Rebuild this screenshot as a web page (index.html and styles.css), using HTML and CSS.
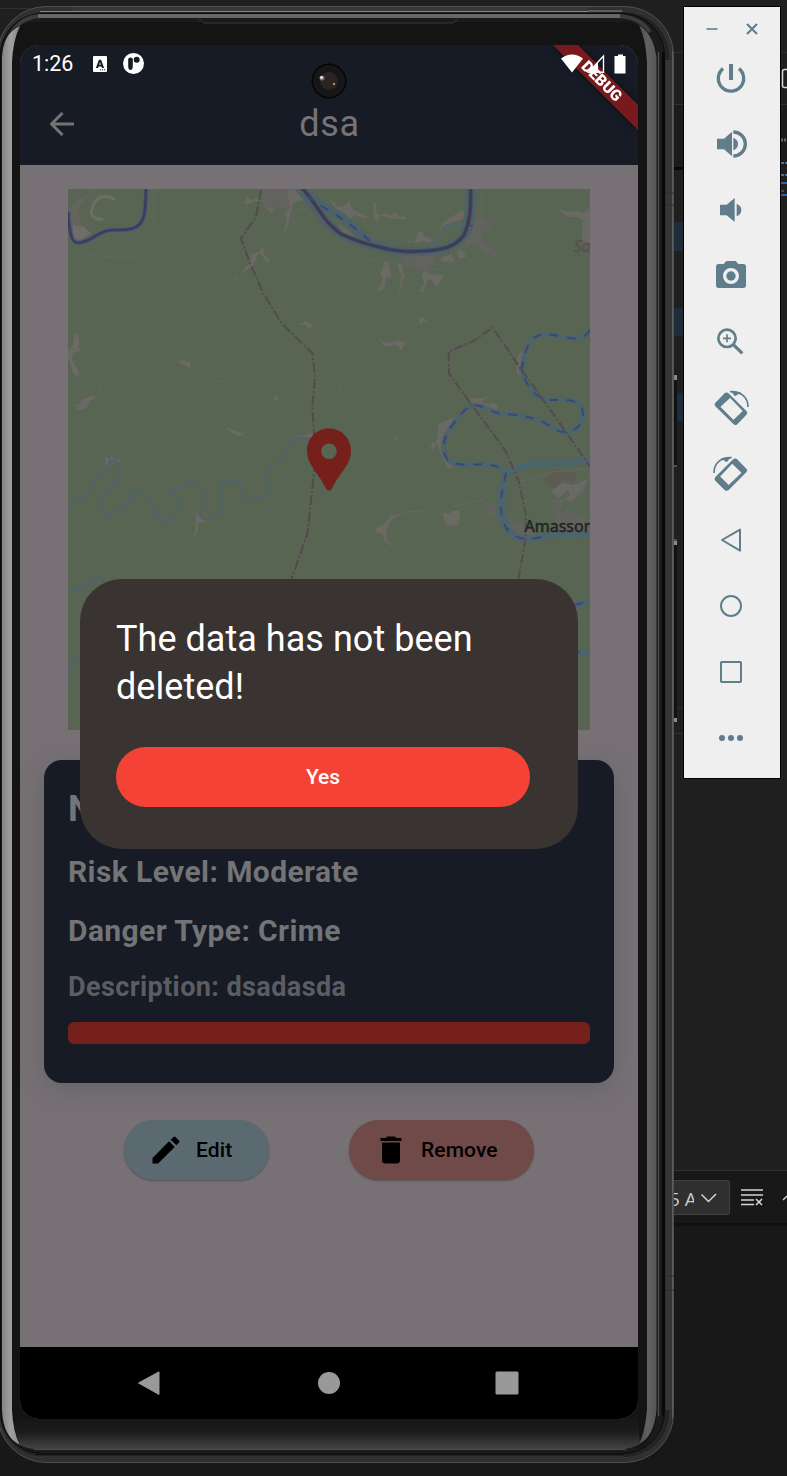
FILE: index.html
```html
<!DOCTYPE html>
<html lang="en">
<head>
<meta charset="utf-8">
<title>Emulator</title>
<link rel="stylesheet" href="styles.css">
</head>
<body>
<div class="desktop">
  <svg class="editor" viewBox="0 0 787 1476">
    <rect width="787" height="1476" fill="#1f1f1f"/>
    <rect y="1171" width="787" height="305" fill="#181818"/>
    <path d="M0 8.500H30M670 52.500H787M670 104.500H787M670 1170.500H787M670 708.500H684M670 733.500H684" stroke="#303030"/>
    <rect x="670" y="105" width="117" height="62" fill="#1b1b1b"/>
    <rect x="670" y="167" width="14" height="3" fill="#080808"/>
    <path d="M672 222H684V251H672ZM672 308H684V336H672ZM672 393H684V421H672Z" fill="#1f2d3a"/>
    <rect x="782.500" y="69.500" width="12" height="18" rx="2" fill="none" stroke="#d8d8d8" stroke-width="1.500"/>
    <path d="M781 140H787" stroke="#8a5a48" stroke-width="3" stroke-dasharray="2 1"/>
    <path d="M781 163H787M781 175H787" stroke="#47719a" stroke-width="2" stroke-dasharray="3 1"/>
    <path d="M781 183H787M781 195H787" stroke="#2864ad" stroke-width="2"/>
    <path d="M781 191H784" stroke="#777"/>
    <rect x="670" y="1223" width="117" height="3" fill="#101010"/>
    <rect x="660.500" y="1180.500" width="69" height="34" rx="2" fill="#2f2f2f" stroke="#3f3f3f"/>
    <path d="M701.500 1194.500L708.500 1201.500L716 1194" fill="none" stroke="#d4d4d4" stroke-width="1.500"/>
    <path d="M741 1190H763M741 1195H763M741 1200H754M741 1204.500H754" stroke="#d4d4d4" stroke-width="1.600"/>
    <path d="M756 1199L762 1205M762 1199L756 1205" stroke="#d4d4d4" stroke-width="1.600"/>
    <path d="M783 1200L787 1196" stroke="#d4d4d4" stroke-width="1.500"/>
  </svg>
  <div class="combo-text">5 A</div>

  <main class="phone">
    <svg class="frame" viewBox="0 0 678 1476">
      <defs>
        <linearGradient id="bottomGlow" x1="0" x2="0" y1="0" y2="1"><stop offset="0" stop-color="#171717"/><stop offset=".45" stop-color="#1c1c1c"/><stop offset="1" stop-color="#444"/></linearGradient>
        <linearGradient id="leftMetal"><stop offset="0" stop-color="#848484"/><stop offset=".5" stop-color="#a0a0a0"/><stop offset="1" stop-color="#858585"/></linearGradient>
        <linearGradient id="rightMetal"><stop offset="0" stop-color="#4e4e4e"/><stop offset=".5" stop-color="#626262"/><stop offset="1" stop-color="#555"/></linearGradient>
      </defs>
      <path d="M670 374H677V465H670ZM670 540H677V721H670Z" fill="#111"/>
      <path d="M673.500 466V540M673 466H677M673 540H677" stroke="#858585"/>
      <path d="M673 375H677V380H673ZM673 541H677V545H673ZM673 718H677V722H673Z" fill="#8a8a8a"/>
      <rect x="-2.500" y="6.500" width="676" height="1456" rx="49" fill="#303030" stroke="#505050"/>
      <path d="M73 7H587V11H73Z" fill="#383838"/>
      <rect x="-1" y="11.500" width="671" height="1446" rx="45" fill="#232323" stroke="#353535"/>
      <path d="M40 11.500H588M588 11H622" stroke="#858585"/>
      <rect x=".5" y="13.500" width="664" height="1440" rx="42" fill="#1b1b1b" stroke="#0a0a0a"/>
      <path d="M10 36Q20 16 42 16H618Q640 17 650 32" fill="none" stroke="#3c3c3c" stroke-width="4"/>
      <path d="M38 16H620" stroke="#676767" stroke-width="4"/>
      <rect x="662" y="52" width="2" height="1364" fill="#090909"/>
      <path d="M658.500 52V1416M666.500 60V1410" stroke="#4a4a4a" stroke-width="1.500"/>
      <path d="M669 60V1410" stroke="#363636" stroke-width="6"/>
      <path d="M672.500 50V1418" stroke="#5c5c5c"/>
      <path d="M2 58Q3 32 19 26L30 22H630L640 26Q655 38 657 56V1412Q655 1440 638 1448H26Q3 1440 2 1412Z" fill="#141414"/>
      <path d="M2 58Q3 33 20 26Q13 40 12 62V1410Q13 1432 20 1445Q3 1437 2 1410Z" fill="url(#leftMetal)"/>
      <path d="M656.500 58Q654 35 639 25Q646 40 647 62V1410Q645 1432 639 1444Q654 1437 656.500 1410Z" fill="url(#rightMetal)"/>
      <path d="M20 1419H638L640 1444Q632 1449 620 1449H38Q26 1449 20 1445L14 1425Z" fill="url(#bottomGlow)"/>
      <path d="M34 1449.500H626" stroke="#4a4a4a"/>
      <path d="M36 1454H624" stroke="#111" stroke-width="2"/>
      <path d="M36 1457.500H624" stroke="#303030" stroke-width="3"/>
      <path d="M199 19L204 23H453L458 19" fill="#1b1b1b" stroke="#383838"/>
      <path d="M666 193H674M666 205H674M666 1276H674M666 1290H674" stroke="#2a2a2a"/>
    </svg>

    <div class="screen">
      <header class="appbar">
        <svg class="banner" viewBox="0 0 100 90">
          <path d="M15 0H40L120 80V105Z" fill="#7a191d"/>
          <text x="64" y="41.500" transform="rotate(45 64 36)" text-anchor="middle" class="banner-text">DEBUG</text>
        </svg>
        <div class="status">
          <span class="time">1:26</span>
          <svg class="s-icon s-a" viewBox="0 0 14 16"><rect width="14" height="16" rx="1" fill="#fff"/><path d="M2.900 12L5.900 3.700H8.100L11.100 12H8.900L8.400 10.400H5.600L5.100 12ZM6.200 8.700H7.800L7 6.200Z" fill="#161b26" fill-rule="evenodd"/><path d="M7 13.800H13" stroke="#161b26" stroke-dasharray="1.200 .8"/></svg>
          <svg class="s-icon s-p" viewBox="0 0 21 21"><circle cx="10.500" cy="10.500" r="10.500" fill="#fff"/><path d="M5.200 6.500Q5.200 4.500 7.500 4.500Q9.800 4.500 9.800 6.500V13Q9.800 17 7.500 17Q5.200 17 5.200 13Z" fill="#161b26"/><circle cx="13.700" cy="6.800" r="3" fill="#161b26"/></svg>
          <span class="spacer"></span>
          <svg class="s-right" viewBox="0 0 66 20"><path d="M0 4.500Q11-3.500 22 4.500L11 18.500Z" fill="#fff"/><path d="M42.500 2V18.200H27.500Z" fill="none" stroke="#fff" stroke-width="1.400"/><path d="M27 19L37 8V19Z" fill="#fff"/><path d="M57 .5H62V2H64.500V19.500H53.500V2H57Z" fill="#fff"/></svg>
        </div>
        <div class="titlebar">
          <svg class="back" viewBox="0 0 24 24"><path d="M24 12H2M12.500 1L1.500 12L12.500 23" fill="none" stroke="#747474" stroke-width="3"/></svg>
          <h1 class="title">dsa</h1>
        </div>
        <svg class="camera" viewBox="0 0 36 36"><circle cx="18" cy="18" r="17.500" fill="#050505"/><circle cx="18" cy="18" r="16" fill="#161616"/><circle cx="18" cy="18" r="9" fill="#292321"/><circle cx="11" cy="15" r="2.500" fill="#7a7580"/><circle cx="10.500" cy="14.500" r="1.200" fill="#fff"/><circle cx="23" cy="21" r="1.200" fill="#c48a4a"/></svg>
      </header>

      <section class="content">
        <svg class="map" viewBox="68 189 522 541">
          <rect x="68" y="189" width="522" height="541" fill="#586552"/>
          <g transform="translate(60 180) scale(.33333)" fill="none" stroke-linejoin="round">
            <g fill="#6a6964">
              <path d="M24 95L45 65L85 45L95 30L60 75L52 105L68 135L95 160L60 190L30 185Z" fill="#64645f"/>
              <path d="M38 135L70 140L92 160L60 180L36 170Z" fill="#706d68"/>
              <path d="M45 460L52 458L58 480L55 500L63 510L38 522L36 540L55 570L58 595L40 582L24 530V510L38 495Z"/>
              <path d="M40 680L58 672L65 658L80 655L95 645L112 652L90 662L80 685L60 690L45 688L60 680Z"/>
              <path d="M350 545L370 540L392 547L390 563L372 556Z"/>
              <path d="M135 832L150 838L155 828L165 838L180 836L175 850H142L145 868L135 850Z"/>
              <path d="M497 742L520 750L545 758L560 757L540 770L515 757L500 748Z"/>
              <path d="M600 50L615 30H680L700 60L685 95L655 80L635 90L610 70Z" fill="#62635e"/>
              <path d="M552 68L562 50L575 60L600 52L595 64L575 66L560 75ZM610 75L645 90L632 98ZM680 28H725L750 75L725 60L700 68L690 110L680 150L668 158L680 125L675 100L690 85ZM720 85L732 90L725 94ZM745 105L758 108L750 112Z"/>
              <path d="M572 225L600 212L610 202L612 225L630 242L618 248L610 230L595 220L580 255L560 270L540 282L555 262L572 250Z"/>
              <path d="M715 435L738 422L760 438L745 445L738 434ZM640 655L650 645L658 657L650 664ZM408 995L418 1010L440 1018L430 1030L415 1025L412 1055L400 1075L407 1040ZM700 770L715 766L720 770L758 757V775ZM435 348L455 340L438 352ZM520 292L532 290L524 300Z"/>
            </g>
            <path d="M165 60Q130 35 105 65Q75 120 130 118" stroke="#6d6d68" stroke-width="9"/>
            <path d="M24 275L80 222L130 230L225 233L280 140V27M24 90L110 27M600 60L810 195" stroke="#636661" stroke-width="3"/>
            <path d="M60 460L100 435L140 410M115 645Q115 590 170 588C230 585 230 540 275 505M293 550L350 545M388 562Q430 610 500 605M460 820V795L500 785V745M535 700Q620 740 570 760M690 400V440M600 490L620 480L645 492M62 368L82 384" stroke="#5e6858" stroke-width="3"/>
            <path d="M24 95C30 195 40 200 90 178C145 142 150 152 200 149C265 144 254 85 258 27" stroke="#50626b" stroke-width="17"/>
            <path d="M24 95C30 195 40 200 90 178C145 142 150 152 200 149C265 144 254 85 258 27" stroke="#474662" stroke-width="10"/>
            <path d="M24 95C30 195 40 200 90 178C145 142 150 152 200 149C265 144 254 85 258 27" stroke="#3b3a60" stroke-width="5"/>
            <path d="M24 990L30 962L65 955Q85 945 110 893L145 872L148 845Q170 835 180 865C185 900 120 940 120 970L140 1008Q155 1010 205 965Q213 925 245 937C275 950 268 970 275 985L305 1020Q325 1035 340 1010Q370 970 355 955C320 940 330 925 345 928C380 928 375 905 390 905C420 910 440 960 428 975C410 1005 425 1018 440 1018C470 1015 495 985 490 975C470 960 485 905 495 903Q540 895 545 930C545 965 560 965 570 965L590 955L620 945C640 925 607 885 612 875L655 845C690 820 675 810 695 775H755" stroke="#4f636a" stroke-width="7"/>
            <path d="M603 30L588 110L543 175L570 250L610 340L665 430L757 520L765 590L757 680L762 760V880L742 1060L695 1197" stroke="#534950" stroke-width="6" stroke-dasharray="30 7 6 7"/>
            <path d="M24 1232Q50 1235 70 1215Q115 1180 140 1210M24 1480V1452Q45 1445 62 1425M26 1480V1505" stroke="#4f636a" stroke-width="8"/>
          </g>
          <g transform="translate(325 180) scale(.33333)" fill="none" stroke-linejoin="round">
            <g fill="#6a6964">
              <path d="M10 55L40 80L60 75L75 62L80 85L95 95L130 110L115 115L90 105L75 118L50 110ZM145 70L155 65L152 92L162 105L190 98L185 108L165 108L155 122L147 110ZM175 108L200 104L210 95L222 112L245 108L240 118L200 115ZM275 160L290 152L300 170L328 180L310 188L290 182L265 192L275 175ZM250 180L270 188L250 186ZM330 155L360 125L410 90L430 105L420 118L385 125L360 135Z"/>
              <path d="M350 230L370 228L375 218L390 245L350 245ZM395 215L412 208L425 232L400 235Z"/>
              <path d="M430 120L465 110L500 130L495 150L468 155L475 185L495 202L510 210L518 232L480 220L450 190L420 200Z" fill="#62635e"/>
              <path d="M225 222H330L320 262L300 275L275 265L245 255Z" fill="#62635e"/>
              <path d="M175 240L190 250L200 290L184 292L178 325L155 335L170 310L172 290L165 280L175 265ZM215 248L230 252L238 290L228 315L225 345L222 330L230 290ZM300 272L315 282L355 285L345 305L335 320L320 300L308 298L295 335L282 335L298 310L290 285ZM280 415L295 410L307 425L297 424L285 435ZM160 475L178 486L200 488L215 482L243 485L235 500L230 512L215 495L200 497L180 500Z"/>
              <path d="M695 85L730 95L750 92L775 100L795 80V190L770 180L775 120L755 112L730 110ZM340 730L360 725L375 715L400 710L380 745L360 755L350 775L355 830L385 865H370L350 830L335 790L325 810L320 798L305 810L322 790L335 785ZM435 655H470L490 650L470 665L492 672L500 668L520 672L515 690L470 675L440 672ZM575 540L585 515L595 515L590 590L575 580ZM352 998L375 1000L380 992L405 992L403 1035L380 1038L360 1028ZM152 1045L180 1030L200 1005L228 1005L200 1018L185 1045L185 1080L210 1105L180 1085L170 1060L155 1060ZM200 768L215 772L225 790Z"/>
              <path d="M675 960L720 955L715 980L705 1000L735 995L795 1020V1065L650 1070L600 1035L570 1025L550 1000L550 1040L575 1065L640 1068L690 1040L695 1000L672 975ZM485 970L510 975L515 1010L495 1010Z" fill="#62635e"/>
              <path d="M795 895L770 940L740 965L720 958L735 945L730 930L700 955L680 935L700 905L745 915Z"/>
              <path d="M695 865L710 880L755 875L745 905L720 900L690 925L665 915L660 900L675 885Z" fill="#5e5c50"/>
            </g>
            <path d="M0 190Q40 225 120 238L225 250Q350 280 410 265Q450 250 450 190L470 110V27M730 27Q745 65 795 80" stroke="#626560" stroke-width="3"/>
            <path d="M200 1010Q240 990 295 995M380 980L475 960L500 990M560 910L690 875L795 865M710 1010L795 895" stroke="#636660" stroke-width="4"/>
            <path d="M0 648H45V600L130 570M240 790L330 775M320 440L430 435" stroke="#5e6858" stroke-width="3"/>
          </g>
          <g transform="translate(240 185) scale(.33333)" fill="none" stroke-linejoin="round">
            <path d="M170 0C235 70 245 110 300 145C350 170 440 198 510 200C590 198 640 195 672 150C695 100 695 50 694 0" stroke="#4d6268" stroke-width="28"/>
            <path d="M694 0C694 60 692 110 670 150" stroke="#4d6268" stroke-width="34"/>
            <path d="M180 12L240 58L300 92L345 130L395 175L450 192" stroke="#4d6268" stroke-width="26"/>
            <path d="M660 118Q620 110 600 150L572 190" stroke="#4e666d" stroke-width="7"/>
            <path d="M290 115L325 135L350 165L310 145Z" fill="#68675f"/>
            <path d="M178 0C235 60 245 105 300 145C350 170 440 198 510 200C590 198 640 195 672 150C695 100 692 50 692 0" stroke="#464a5d" stroke-width="13"/>
            <path d="M178 0C235 60 245 105 300 145C350 170 440 198 510 200C590 198 640 195 672 150C695 100 692 50 692 0" stroke="#3e3a50" stroke-width="7"/>
            <path d="M200 32L242 62L300 97L345 130L395 172" stroke="#384780" stroke-width="6" stroke-dasharray="26 26"/>
            <path d="M440 190L510 199L610 193M682 118L698 124" stroke="#3b4074" stroke-width="4" stroke-dasharray="26 26"/>
          </g>
          <g transform="translate(325 180) scale(.33333)" fill="none" stroke-linejoin="round">
            <g stroke="#4c646b" stroke-width="15">
              <path d="M795 450C765 500 700 460 655 462C605 470 600 520 590 570C610 630 630 655 680 660C740 655 775 665 774 705C770 750 730 765 690 750C640 705 570 705 520 700C465 680 450 660 415 695C380 735 335 790 365 835C385 865 450 850 480 853Q525 855 543 880"/>
              <path d="M543 880C530 930 525 965 530 1010C540 1055 570 1080 620 1077Q680 1055 795 1065" stroke-width="21"/>
              <path d="M530 925V1010L545 1040" stroke-width="29"/>
              <path d="M543 880Q580 860 630 850Q700 855 795 840" stroke-width="20"/>
            </g>
            <path d="M795 450C765 500 700 460 655 462C605 470 600 520 590 570C610 630 630 655 680 660C740 655 775 665 774 705C770 750 730 765 690 750C640 705 570 705 520 700C465 680 450 660 415 695C380 735 335 790 365 835C385 865 450 850 480 853Q525 855 543 880C530 930 525 965 530 1010C540 1055 570 1080 620 1077L665 1067" stroke="#3b4874" stroke-width="6" stroke-dasharray="26 26"/>
            <path d="M580 1197L602 1075V1000L580 900L540 810L440 675L372 580L371 515L445 483L503 443L590 570L680 695L795 860" stroke="#544b52" stroke-width="6" stroke-dasharray="28 7 6 7"/>
            <path d="M740 1278L795 1262M740 1414L795 1422" stroke="#4c646b" stroke-width="18"/>
            <path d="M750 1275L775 1268M740 1414L765 1418" stroke="#394783" stroke-width="6"/>
          </g>
          <text x="574" y="252" class="map-place">Sa</text>
          <text x="524.500" y="531.500" class="map-town">Amasson</text>
          <path d="M329 428.500C316.500 428.500 307 438.500 307 450.500C307 465 318 472 326 488.500Q329 493 332 488.500C340 472 351 465 351 450.500C351 438.500 341.500 428.500 329 428.500ZM329 443.500A7.800 7.800 0 1 1 329 459.100A7.800 7.800 0 1 1 329 443.500Z" fill="#75201a" fill-rule="evenodd"/>
        </svg>

        <article class="card">
          <p class="name">Name: dsa</p>
          <p class="fact risk">Risk Level: Moderate</p>
          <p class="fact danger">Danger Type: Crime</p>
          <p class="desc">Description: dsadasda</p>
          <div class="level"></div>
        </article>

        <div class="actions">
          <div class="btn edit"><svg class="btn-icon" viewBox="0 0 24 24"><path d="M3 17.250V21h3.750L17.810 9.940l-3.750-3.750L3 17.250zM20.710 7.040a1 1 0 0 0 0-1.410l-2.340-2.340a1 1 0 0 0-1.410 0l-1.830 1.830 3.750 3.750 1.830-1.830z"/></svg><span>Edit</span></div>
          <div class="btn remove"><svg class="btn-icon" viewBox="0 0 24 24"><path d="M6 19c0 1.100.9 2 2 2h8c1.100 0 2-.9 2-2V7H6v12zM19 4h-3.500l-1-1h-5l-1 1H5v2h14V4z"/></svg><span>Remove</span></div>
        </div>
      </section>

      <nav class="nav">
        <svg class="nav-icon" viewBox="0 0 24 24"><path d="M1.500 12L22 .8V23.500Z" fill="#999" stroke="#999" stroke-linejoin="round"/></svg>
        <svg class="nav-icon" viewBox="0 0 24 24"><circle cx="13" cy="12" r="11" fill="#999"/></svg>
        <svg class="nav-icon" viewBox="0 0 24 24"><rect x=".5" y=".5" width="23" height="23" rx="1.500" fill="#999"/></svg>
      </nav>

      <div class="dialog">
        <p class="dialog-text">The data has not been deleted!</p>
        <div class="yes">Yes</div>
      </div>
    </div>
  </main>

  <aside class="tools">
    <svg class="window-controls" viewBox="0 0 96 38"><path d="M22.500 22H33.500" stroke="#7f98a4" stroke-width="2"/><path d="M63 17L73 27M73 17L63 27" stroke="#607d8b" stroke-width="2"/></svg>
    <svg class="tool" viewBox="132 180 108 108"><path d="M183 192V240" stroke="#607d8b" stroke-width="12" fill="none"/><path d="M159 206A38 38 0 1 0 207 206" stroke="#607d8b" stroke-width="10" fill="none"/></svg>
    <svg class="tool" viewBox="132 378 108 108"><path d="M141 416H162L186 395V469L162 448H141ZM190 413Q204 419 204 432T190 451Z" fill="#607d8b"/><path d="M190 396A36 36 0 0 1 190 468" stroke="#607d8b" stroke-width="10" fill="none"/></svg>
    <svg class="tool" viewBox="132 576 108 108"><path d="M150 614H170L194 594V666L170 646H150ZM200 611Q214 617 214 630T200 649Z" fill="#607d8b"/></svg>
    <svg class="tool" viewBox="132 774 108 108"><path d="M146 792H161L169 783H197L205 792H220Q228 792 228 800V856Q228 864 220 864H146Q138 864 138 856V800Q138 792 146 792ZM183 804A24 24 0 1 0 183 852A24 24 0 1 0 183 804Z" fill="#607d8b" fill-rule="evenodd"/><circle cx="183" cy="828" r="14" fill="#607d8b"/></svg>
    <svg class="tool" viewBox="132 972 108 108"><g stroke="#607d8b" fill="none"><circle cx="171" cy="1015" r="26" stroke-width="8"/><path d="M171 1003V1027M159 1015H183" stroke-width="5"/><path d="M190 1034L217 1060" stroke-width="10"/></g></svg>
    <svg class="tool" viewBox="132 60 108 108"><path d="M165 69Q171 65 177 71L230 124Q234 129 229 134L202 163Q196 167 190 162L136 109Q131 103 136 98ZM177 80L148 107L193 152L221 126Z" fill="#607d8b" fill-rule="evenodd"/><path d="M165 69L181 83L150 112L136 103ZM219 122L232 130L196 166L186 154Z" fill="#607d8b"/><path d="M180 65C210 63 234 80 234 111" fill="none" stroke="#607d8b" stroke-width="5"/><path d="M182 63L214 67L195 79Z" fill="#607d8b"/></svg>
    <svg class="tool" viewBox="128 258 108 108"><g transform="translate(-4 0)"><path d="M200 267Q194 263 188 269L136 321Q131 326 136 332L164 360Q170 365 176 360L229 307Q234 301 229 296ZM188 280L217 306L172 349L146 324Z" fill="#607d8b" fill-rule="evenodd"/><path d="M200 267L185 280L216 310L231 300ZM147 316L134 328L168 363L180 349Z" fill="#607d8b"/><path d="M185 263C155 261 132 278 132 309" fill="none" stroke="#607d8b" stroke-width="5"/><path d="M183 261L152 265L170 277Z" fill="#607d8b"/></g></svg>
    <svg class="tool" viewBox="132 456 108 108"><path d="M156 510L210 479V542Z" fill="none" stroke="#607d8b" stroke-width="6" stroke-linejoin="round"/></svg>
    <svg class="tool" viewBox="132 654 108 108"><circle cx="183" cy="708" r="30" fill="none" stroke="#607d8b" stroke-width="6"/></svg>
    <svg class="tool" viewBox="132 852 108 108"><rect x="153" y="876" width="60" height="60" rx="2" fill="none" stroke="#607d8b" stroke-width="6"/></svg>
    <svg class="tool" viewBox="132 1050 108 108"><g fill="#607d8b"><circle cx="156" cy="1104" r="9"/><circle cx="183" cy="1104" r="9"/><circle cx="210" cy="1104" r="9"/></g></svg>
  </aside>
</div>
</body>
</html>
```
FILE: styles.css
```css
* { box-sizing: border-box; }
body { margin: 0; background: #1f1f1f; font-family: Roboto, sans-serif; }
svg { display: block; flex: none; }
p, h1 { margin: 0; }

.desktop { position: relative; width: 787px; height: 1476px; overflow: hidden; }
.editor { position: absolute; inset: 0; width: 787px; height: 1476px; }
.combo-text {
  position: absolute; left: 669px; top: 1186px; width: 25px; overflow: hidden;
  font: 19px/26px "Open Sans", sans-serif; color: #ccc; white-space: nowrap;
}

/* Device window */
.phone { position: absolute; left: 0; top: 0; width: 678px; height: 1476px; padding: 45px 40px 57px 20px; }
.frame { position: absolute; left: 0; top: 0; width: 678px; height: 1476px; }
.screen {
  position: relative; width: 618px; height: 1374px; display: flex; flex-direction: column;
  border-radius: 19px; overflow: hidden; background: #777175;
}

.appbar { position: relative; height: 120px; background: #161b26; }
.banner { position: absolute; right: 0; top: 0; width: 100px; height: 90px; filter: drop-shadow(0 0 4px rgba(0, 0, 0, .5)); }
.banner-text { font: 900 15.500px Roboto, sans-serif; fill: #fff; }
.camera { position: absolute; left: 291px; top: 18px; width: 36px; height: 36px; }
.status { position: relative; display: flex; align-items: center; height: 37px; padding: 0 11px 0 12px; }
.time { font-size: 21.500px; line-height: 37px; color: #fff; width: 61px; }
.s-a { width: 14px; height: 16px; }
.s-p { width: 21px; height: 21px; margin-left: 16px; }
.spacer { flex: 1; }
.s-right { width: 66px; height: 20px; }
.titlebar { position: relative; display: grid; grid-template-columns: 30px 1fr 30px; align-items: center; height: 82px; padding: 1px 29px 0 30px; }
.back { width: 24px; height: 24px; }
.title { text-align: center; font-size: 36px; font-weight: 400; color: #747474; letter-spacing: .7px; }

.content { flex: 1; padding: 24px 24px 0; }
.map { width: 522px; height: 541px; margin: 0 24px; }
.map-place { font: italic 15.500px "Noto Sans", sans-serif; fill: #584f59; stroke: #584f59; stroke-width: .5px; }
.map-town { font: 16px "Noto Sans", sans-serif; fill: #222522; stroke: #222522; stroke-width: .5px; }

.card {
  margin-top: 30px; height: 323px; padding: 24px; border-radius: 18px; background: #161b26;
  box-shadow: 0 6px 24px rgba(70, 75, 75, .35); font-weight: 700; color: #737475; white-space: nowrap;
}
.name { font-size: 36px; line-height: 50px; }
.fact { font-size: 30px; letter-spacing: .4px; }
.risk { margin-top: 8px; line-height: 60px; }
.danger { line-height: 58px; }
.desc { font-size: 27px; line-height: 54px; letter-spacing: .4px; color: #5b5d62; }
.level { margin-top: 8px; height: 22px; border-radius: 6px; background: #75201a; }

.actions { display: flex; gap: 80px; margin: 37px 80px 0; }
.btn {
  display: flex; align-items: center; height: 60px; border-radius: 30px; color: #000;
  font-size: 21px; font-weight: 500; letter-spacing: .1px; box-shadow: 0 1px 2px rgba(0, 0, 0, .3);
}
.btn-icon { width: 36px; height: 36px; fill: #000; }
.edit { width: 145px; padding-left: 24px; gap: 12px; background: #5b6a71; }
.remove { width: 185px; padding-left: 24px; gap: 12px; background: #704949; }

.nav { display: flex; justify-content: space-between; align-items: center; height: 72px; padding: 0 119px 0 117px; background: #000; }
.nav-icon { width: 24px; height: 24px; }

.dialog {
  position: absolute; left: 60px; top: 534px; width: 498px; height: 270px; padding: 36px;
  border-radius: 42px; background: #393332;
}
.dialog-text { font-size: 36px; line-height: 48px; letter-spacing: .04px; color: #fff; }
.yes {
  width: 414px; height: 60px; margin-top: 36px; border-radius: 30px; background: #f44336; color: #fff;
  font-size: 21px; font-weight: 500; line-height: 61px; text-align: center;
}

/* Emulator toolbar window */
.tools {
  position: absolute; left: 683px; top: 6px; width: 98px; height: 773px; border: 1px solid #000;
  display: flex; flex-direction: column; align-items: center; background: #efefef;
}
.window-controls { width: 96px; height: 38px; }
.tool { width: 36px; height: 36px; margin: 15px 0; overflow: visible; }
```
